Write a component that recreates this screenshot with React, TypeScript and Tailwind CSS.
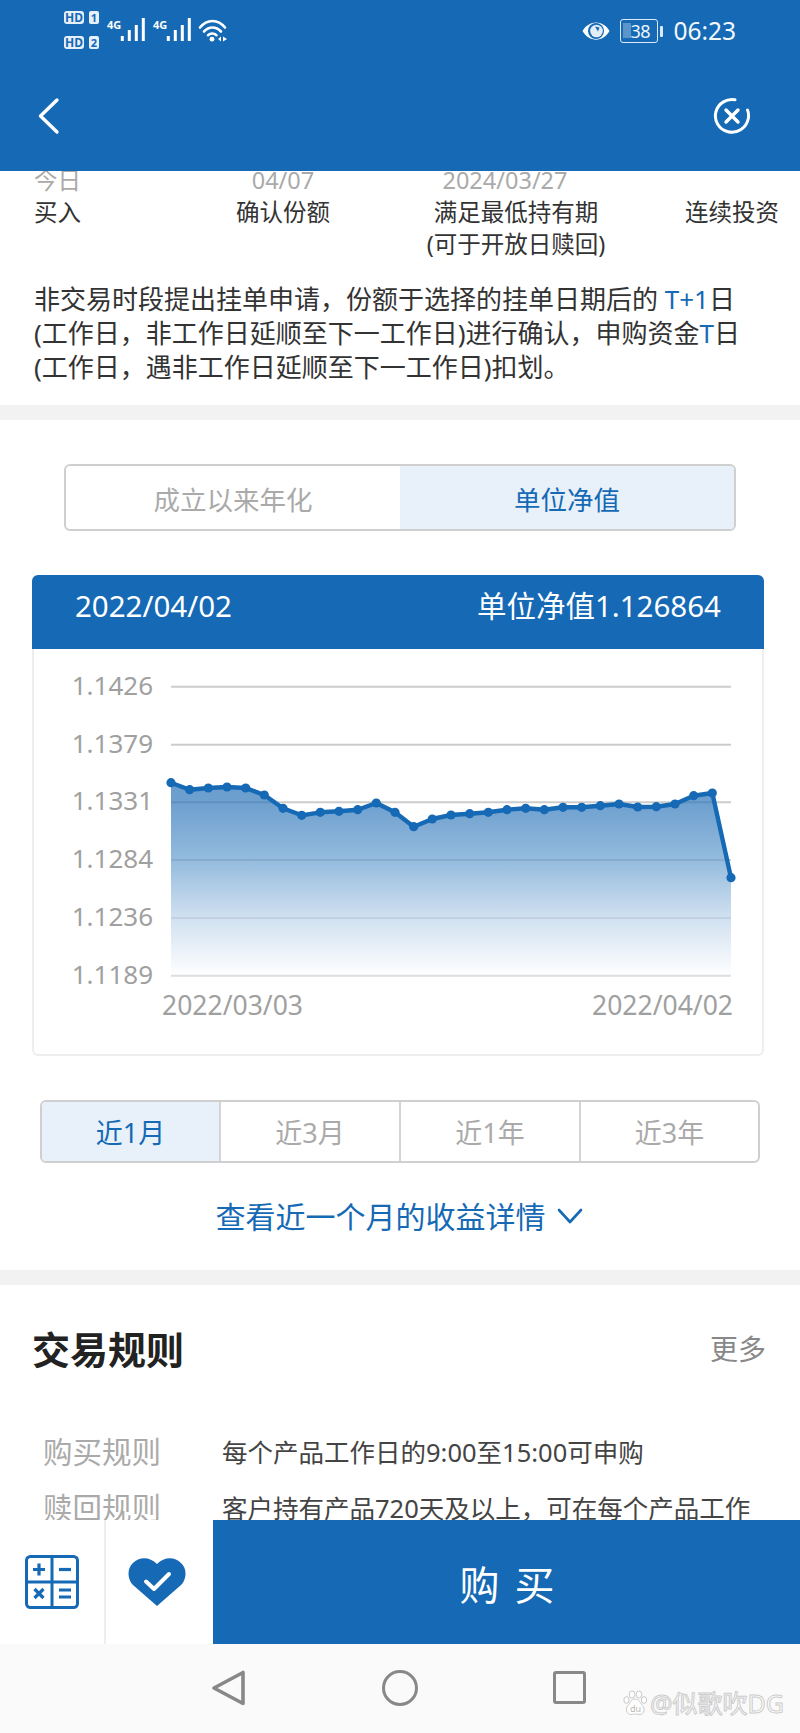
const BLUE = "#1569b5";

// chart points, in page coordinates (the svg viewBox matches the page)
const POINTS: [number, number][] = [
  [171, 782.7], [189.7, 789.7], [208.3, 788], [227, 787], [245.7, 788], [264.3, 795],
  [283, 808.3], [301.7, 815.3], [320.3, 812.3], [339, 811.3], [357.7, 809.7], [376.3, 803],
  [395, 812.3], [413.7, 826.7], [432.3, 819], [451, 815], [469.7, 813.7], [488.3, 812.3],
  [507, 809.7], [525.7, 808.3], [544.3, 809.7], [563, 807.3], [581.7, 807.3], [600.3, 805.7],
  [619, 804], [637.7, 807], [656.3, 806.7], [675, 804], [693.7, 795.7], [712.3, 793], [731, 877.7],
];

const GRID = [
  { y: 686.7, label: "1.1426" },
  { y: 744.7, label: "1.1379" },
  { y: 802.3, label: "1.1331" },
  { y: 860, label: "1.1284" },
  { y: 918, label: "1.1236" },
  { y: 975.5, label: "1.1189" },
];

function SignalBars() {
  return (
    <svg width="25" height="24" viewBox="120 18 25 24" fill="#fff">
      <rect x="120.8" y="36" width="3" height="5" />
      <rect x="127.8" y="30" width="3" height="11" />
      <rect x="134.8" y="25" width="3" height="16" />
      <rect x="141.8" y="18" width="3" height="23" />
    </svg>
  );
}

function StatusBar() {
  return (
    <div className="flex h-[60px] justify-between pl-[64px] pr-[64px]">
      <div className="flex items-start">
        {/* sim slots */}
        <div className="mt-[11px] flex flex-col gap-[12px]">
          {["1", "2"].map((n) => (
            <div key={n} className="flex gap-[5px] text-[#1569b5]">
              <span className="flex h-[13px] w-[20px] items-center justify-center rounded-[3px] bg-[#e6f0f9] text-[12px] font-bold leading-none">HD</span>
              <span className="flex h-[13px] w-[10px] items-center justify-center rounded-[2px] bg-[#e6f0f9] text-[11px] font-bold leading-none">{n}</span>
            </div>
          ))}
        </div>
        <div className="ml-[8px] mt-[18px] flex">
          <span className="w-[13px] text-[11px] font-bold leading-[13px] text-white">4G</span>
          <SignalBars />
          <span className="ml-[8px] w-[13px] text-[11px] font-bold leading-[13px] text-white">4G</span>
          <SignalBars />
          <svg className="ml-[7px]" width="30" height="25" viewBox="196 17 30 25" fill="none" stroke="#fff" strokeWidth="2.6" strokeLinecap="round">
            <path d="M198 26.5C205 17.8 216 17.8 223 26.5" />
            <path d="M202 30.5C207 25.2 214 25.2 219 30.5" />
            <path d="M206 34.2C208.5 32 212 32 214.5 34.2" />
            <circle cx="210" cy="38.2" r="2.4" fill="#fff" stroke="none" />
            <path d="M219 35.5V40.5L216 38Z M221 35.5V40.5L225 38Z" fill="#fff" stroke="none" />
          </svg>
        </div>
      </div>
      <div className="mt-[19px] flex h-[24px] items-center">
        <svg width="28" height="20" viewBox="0 0 28 20">
          <path d="M0.5 10C7 -1.5 21 -1.5 27.5 10C21 21.5 7 21.5 0.5 10Z" fill="#fff" />
          <circle cx="14" cy="10" r="8" fill="#1569b5" />
          <circle cx="14.5" cy="10" r="6.3" fill="#e3edf7" />
          <path d="M13 5.5L17.5 6.5L16 10.5Z" fill="#1569b5" />
        </svg>
        <div className="relative ml-[10px] flex h-[24px] w-[38px] items-center justify-center rounded-[3px] border-[1.5px] border-[#dce9f6] pl-[2px] text-[18px] leading-none text-[#eef5fb]">
          <span className="absolute left-[2px] top-[3px] h-[15px] w-[8px] bg-white/30" />
          <span className="relative tracking-[-0.5px]">38</span>
        </div>
        <span className="ml-[2px] h-[11px] w-[3px] rounded-[1px] bg-[#dce9f6]" />
        <span className="ml-[10px] text-[24.5px] leading-none text-[#f2f7fc]">06:23</span>
      </div>
    </div>
  );
}

function TopBar() {
  return (
    <div className="flex h-[111px] items-center justify-between pl-[36px] pr-[49px]">
      <svg width="26" height="38" viewBox="0 0 26 38" fill="none" stroke="#fff" strokeWidth="3.4" strokeLinecap="round" strokeLinejoin="round">
        <path d="M21 3L4.5 19L21 35" />
      </svg>
      <svg width="38" height="38" viewBox="0 0 38 38" fill="none" stroke="#fff" strokeWidth="3" strokeLinecap="round">
        <path d="M22 2.8C14 1.3 5.5 6 3 14.5C0.5 23.5 6 32.5 15 34.7C24.5 37 33.5 31 35.3 21.5C35.8 18.5 35.6 15.5 34.5 13" />
        <path d="M13 13L25 25M25 13L13 25" strokeWidth="3.4" />
      </svg>
    </div>
  );
}

function Steps() {
  return (
    <div className="-mt-[7px] grid grid-cols-[201px_189px_261px_96px] pl-[34px] text-[23.5px] leading-[32px] text-[#333]">
      <div>
        <div className="text-[#aaa]">今日</div>
        <div>买入</div>
      </div>
      <div className="w-[96px] text-center">
        <div className="text-[#aaa]">04/07</div>
        <div>确认份额</div>
      </div>
      <div className="w-[184px] text-center">
        <div className="pr-[22px] text-[#aaa]">2024/03/27</div>
        <div>满足最低持有期</div>
        <div>(可于开放日赎回)</div>
      </div>
      <div>
        <div className="h-[32px]" />
        <div>连续投资</div>
      </div>
    </div>
  );
}

function NetValueChart() {
  const line = POINTS.map(([x, y]) => `${x},${y}`).join(" ");
  const area = `171,975.5 ${line} 731,975.5`;
  return (
    <div className="ml-[32px] mt-[44px] w-[732px]">
      <div className="flex h-[74px] items-center justify-between rounded-t-[6px] bg-[#1569b5] px-[43px] pb-[11px] text-[29.5px] text-white">
        <span>2022/04/02</span>
        <span>单位净值1.126864</span>
      </div>
      <div className="rounded-b-[6px] border-x-2 border-b-2 border-[#eeeeee]">
        <svg className="block" width="728" height="405" viewBox="34 649 728 405">
          <defs>
            <linearGradient id="fade" x1="0" y1="0" x2="0" y2="1">
              <stop offset="0" stopColor="#2a72b8" stopOpacity="0.7" />
              <stop offset="0.1" stopColor="#2f76ba" stopOpacity="0.7" />
              <stop offset="0.4" stopColor="#669ed0" stopOpacity="0.7" />
              <stop offset="0.7" stopColor="#bcd3ea" stopOpacity="0.7" />
              <stop offset="1" stopColor="#ffffff" stopOpacity="0.7" />
            </linearGradient>
          </defs>
          {GRID.map((g) => (
            <g key={g.label}>
              <line x1="171" x2="731" y1={g.y} y2={g.y} stroke="#cccccc" strokeWidth="2" />
              <text x="153" y={g.y + 8} textAnchor="end" fontSize="26" fill="#a0a0a0">{g.label}</text>
            </g>
          ))}
          <polygon points={area} fill="url(#fade)" />
          <polyline points={line} fill="none" stroke={BLUE} strokeWidth="4.4" strokeLinejoin="round" />
          {POINTS.map(([x, y]) => (
            <circle key={x} cx={x} cy={y} r="4.6" fill={BLUE} />
          ))}
          <text x="162" y="1014.5" fontSize="26.5" fill="#a0a0a0">2022/03/03</text>
          <text x="733" y="1014.5" textAnchor="end" fontSize="26.5" fill="#a0a0a0">2022/04/02</text>
        </svg>
      </div>
    </div>
  );
}

function RangeTabs() {
  const tabs = ["近1月", "近3月", "近1年", "近3年"];
  return (
    <div className="mx-[40px] mt-[44px] grid h-[63px] w-[720px] grid-cols-[177px_180px_180px_1fr] overflow-hidden rounded-[6px] border-2 border-[#cfcfcf] text-[27px]">
      {tabs.map((t, i) => (
        <div
          key={t}
          className={
            i === 0
              ? "flex items-center justify-center bg-[#e8f1f9] pt-[4px] text-[#1569b5]"
              : "flex items-center justify-center border-l-2 border-[#d4d4d4] pt-[4px] text-[#aaaaaa]"
          }
        >
          {t}
        </div>
      ))}
    </div>
  );
}

function BottomBar() {
  return (
    <div className="flex h-[124px] bg-white">
      <div className="flex w-[106px] items-center justify-center border-r-2 border-[#eeeeee]">
        <svg width="54" height="54" viewBox="0 0 54 54" fill="none" stroke={BLUE} strokeWidth="3">
          <rect x="1.5" y="1.5" width="51" height="51" rx="4" />
          <path d="M27 1.5V52.5M1.5 27H52.5" />
          <g strokeWidth="3.2">
            <path d="M8 14.5H20M14 8.5V20.5" />
            <path d="M34 14.5H46" />
            <path d="M9.5 34L18.5 43M18.5 34L9.5 43" />
            <path d="M34 35H46M34 42H46" />
          </g>
        </svg>
      </div>
      <div className="flex w-[107px] items-center justify-center pr-[6px]">
        <svg width="58" height="48" viewBox="0 0 58 48">
          <path d="M29 48L5 27C-1 21 -1 10 5 5C11 -1.5 22 -1.5 29 6C36 -1.5 47 -1.5 53 5C59 10 59 21 53 27Z" fill={BLUE} />
          <path d="M18 23.5L26 31L41 16" fill="none" stroke="#fff" strokeWidth="4" strokeLinecap="round" strokeLinejoin="round" />
        </svg>
      </div>
      <div className="flex flex-1 items-center justify-center bg-[#1569b5] pt-[6px] text-[40px] tracking-[15px] text-white">
        <span className="ml-[16px]">购买</span>
      </div>
    </div>
  );
}

function NavBar() {
  return (
    <div className="relative flex h-[89px] items-center justify-center gap-[135px] bg-[#fafafa] pb-[2px] pr-[4px]">
      <svg width="36" height="38" viewBox="0 0 36 38" fill="none" stroke="#888888" strokeWidth="3.6" strokeLinejoin="round">
        <path d="M3 19L32 3.5V34.5Z" />
      </svg>
      <span className="h-[36px] w-[36px] rounded-full border-[3.6px] border-[#888888]" />
      <span className="h-[33px] w-[33px] rounded-[3px] border-[3.6px] border-[#888888]" />
      {/* watermark */}
      <div className="absolute left-[623px] top-[46px] flex items-center gap-[3px] opacity-90">
        <svg width="24" height="26" viewBox="0 0 24 26" fill="#ffffff" stroke="#c4c4c4" strokeWidth="1">
          <ellipse cx="3.5" cy="10" rx="2.6" ry="3.4" />
          <ellipse cx="9" cy="4.5" rx="2.8" ry="3.6" />
          <ellipse cx="16" cy="4.5" rx="2.8" ry="3.6" />
          <ellipse cx="21" cy="10" rx="2.6" ry="3.4" />
          <path d="M12 9C8 9 7.5 13 5 15.5C2 18.5 3.5 24.5 8 24.5C10 24.5 11 24 12.5 24C14 24 15.5 24.5 17 24.5C21 24.5 22.5 18.5 19.5 15.5C17 13 16.5 9 12 9Z" />
          <text x="12.5" y="22" textAnchor="middle" fontSize="9" fill="#b0b0b0" stroke="none">du</text>
        </svg>
        <span className="text-[25px] leading-none text-white [-webkit-text-stroke:1px_#c8c8c8]">@似歌吹DG</span>
      </div>
    </div>
  );
}

export default function App() {
  return (
    <div className="flex h-[1733px] w-[800px] flex-col overflow-hidden bg-white [font-family:'Noto_Sans','Noto_Sans_CJK_SC',sans-serif]">
      <header className="relative z-10 h-[171px] shrink-0 bg-[#1569b5]">
        <StatusBar />
        <TopBar />
      </header>

      <main className="min-h-0 flex-1 overflow-hidden">
        <Steps />
        <p className="mt-[22px] whitespace-nowrap pl-[34px] text-[26px] leading-[34px] text-[#333]">
          非交易时段提出挂单申请，份额于选择的挂单日期后的 <span className="text-[#1569b5]">T+1</span>日
          <br />
          (工作日，非工作日延顺至下一工作日)进行确认，申购资金<span className="text-[#1569b5]">T</span>日
          <br />
          (工作日，遇非工作日延顺至下一工作日)扣划。
        </p>
        <div className="mt-[21px] h-[15px] bg-[#f2f2f2]" />

        {/* value toggle */}
        <div className="mx-[64px] mt-[44px] grid h-[67px] grid-cols-2 overflow-hidden rounded-[6px] border-2 border-[#cfcfcf] text-[26.5px]">
          <div className="flex items-center justify-center pt-[6px] text-[#aaaaaa]">成立以来年化</div>
          <div className="flex items-center justify-center bg-[#e8f1f9] pt-[6px] text-[#1569b5]">单位净值</div>
        </div>

        <NetValueChart />
        <RangeTabs />

        <div className="mt-[18px] flex h-[70px] items-center justify-center gap-[11px] pr-[2px] text-[30px] text-[#1569b5]">
          <span>查看近一个月的收益详情</span>
          <svg width="26" height="16" viewBox="0 0 26 16" fill="none" stroke="#1569b5" strokeWidth="2.6" strokeLinecap="round" strokeLinejoin="round">
            <path d="M2 2L13 14L24 2" />
          </svg>
        </div>
        <div className="mt-[19px] h-[15px] bg-[#f2f2f2]" />

        {/* trading rules */}
        <div className="mt-[42px] flex items-center justify-between pl-[32px] pr-[34px]">
          <h2 className="text-[38px] font-bold leading-[44px] text-[#222]">交易规则</h2>
          <span className="text-[28px] text-[#888]">更多</span>
        </div>
        <div className="mt-[53px] pl-[43px] text-[25.5px] text-[#444]">
          <div className="flex h-[56px] items-center">
            <span className="w-[179px] text-[29.5px] text-[#aaaaaa]">购买规则</span>
            <span>每个产品工作日的9:00至15:00可申购</span>
          </div>
          <div className="flex h-[56px] items-center">
            <span className="w-[179px] text-[29.5px] text-[#aaaaaa]">赎回规则</span>
            <span>客户持有产品720天及以上，可在每个产品工作</span>
          </div>
        </div>
      </main>

      <BottomBar />
      <NavBar />
    </div>
  );
}
